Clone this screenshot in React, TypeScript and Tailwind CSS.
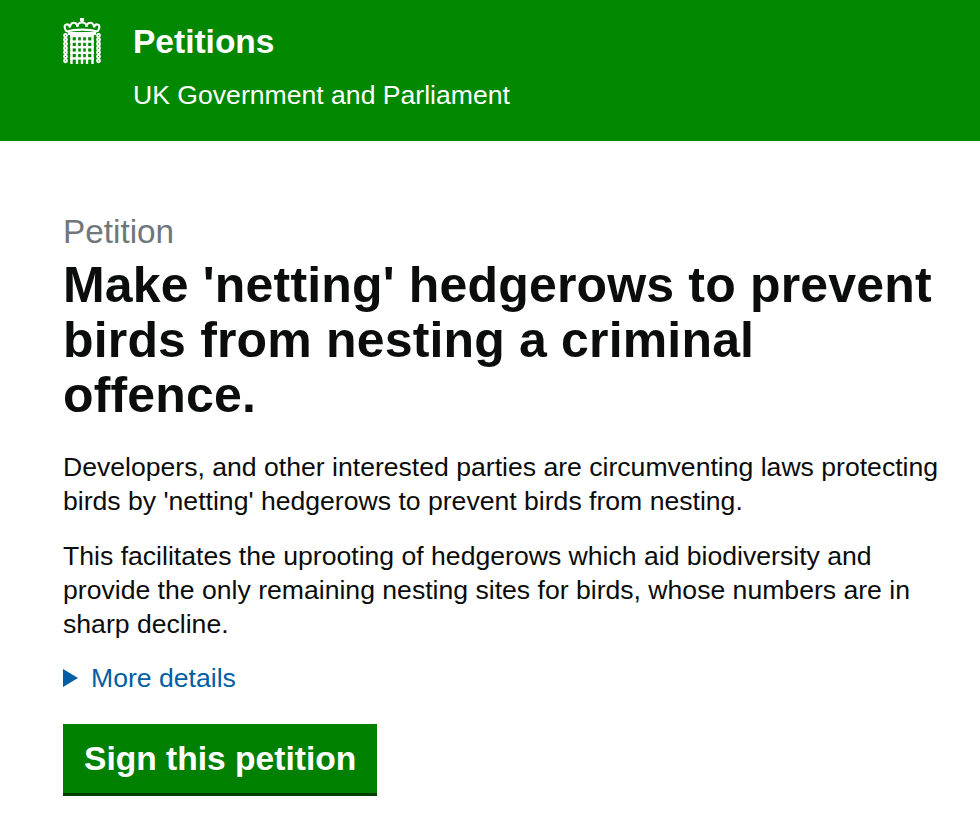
function Portcullis() {
  const bars = [8.500, 14, 19, 24, 29.500];
  const rails = [18, 23.600, 29.200, 34.800, 40.400];
  const links = [16, 20.200, 24.400, 28.600, 32.800, 37, 41.200];
  return (
    <svg width="38" height="46" viewBox="0 0 38 46" fill="none" stroke="#fff" aria-hidden="true">
      {/* crown */}
      <path
        strokeWidth="2.100"
        d="M3.500 13.500C1 10 1 7 3.500 6.500c2-.4 3 1 3.500 3M7 9.500C7 6 9.500 4 12 5c1.500.6 2.500 2 2.500 4M14.500 9C14.500 6 16.500 4.500 19 4.500S23.500 6 23.500 9M23.500 9c0-2 1-3.400 2.500-4 2.500-1 5 1 5 4.500M31 9.500c.5-2 1.500-3.400 3.500-3 2.500.5 2.500 3.500 0 7M3.500 13.500C12 11 26 11 34.500 13.500"
      />
      <path strokeWidth="2.800" d="M19 0v4M17 1.500h4M5 15.500h28" />
      {/* chains */}
      {[2.500, 35.500].map((x) =>
        links.map((y) => <rect key={`${x}-${y}`} x={x - 1.400} y={y} width="2.800" height="3" rx="1.200" strokeWidth="1.900" />)
      )}
      {/* gate */}
      {bars.map((x) => (
        <path key={x} strokeWidth="2.400" d={`M${x} 17V46`} />
      ))}
      {rails.map((y) => (
        <path key={y} strokeWidth="2.400" d={`M7 ${y}H31`} />
      ))}
    </svg>
  );
}

export default function App() {
  return (
    <div className="min-h-[822px] overflow-hidden bg-white font-['Liberation_Sans',Arial,sans-serif] text-[#0b0c0c]">
      <header className="flex h-[141px] gap-[32px] bg-[#008800] pl-[63px] pt-[18px] text-white">
        <Portcullis />
        <div>
          <div className="pt-[1px] text-[33.500px] leading-[46px] font-bold">Petitions</div>
          <div className="mt-[13px] text-[26.600px] leading-[34px]">UK Government and Parliament</div>
        </div>
      </header>

      <main className="pr-[30px] pl-[63px] pt-[71px]">
        <div className="text-[33.300px] leading-[40px] text-[#6f777b]">Petition</div>
        <h1 className="mt-[6px] text-[50px] leading-[55px] font-bold tracking-[0.170px]">
          Make 'netting' hedgerows to prevent birds from nesting a criminal offence.
        </h1>
        <p className="mt-[27px] text-[26.600px] leading-[34px]">
          Developers, and other interested parties are circumventing laws protecting birds by 'netting' hedgerows to
          prevent birds from nesting.
        </p>
        <p className="mt-[21px] text-[26.600px] leading-[34px]">
          This facilitates the uprooting of hedgerows which aid biodiversity and provide the only remaining nesting
          sites for birds, whose numbers are in sharp decline.
        </p>
        <div className="mt-[20px] flex items-center gap-[13px] text-[26.600px] leading-[34px] text-[#005ea5]">
          <span className="h-0 w-0 border-y-[9px] border-l-[15px] border-y-transparent border-l-[#005ea5]" />
          More details
        </div>
        <button className="mt-[29px] block border-b-[3px] border-[#003f00] bg-[#008000] px-[21px] pt-[12px] pb-[11px] text-[33.600px] leading-[46px] font-bold text-white">
          Sign this petition
        </button>
      </main>
    </div>
  );
}
